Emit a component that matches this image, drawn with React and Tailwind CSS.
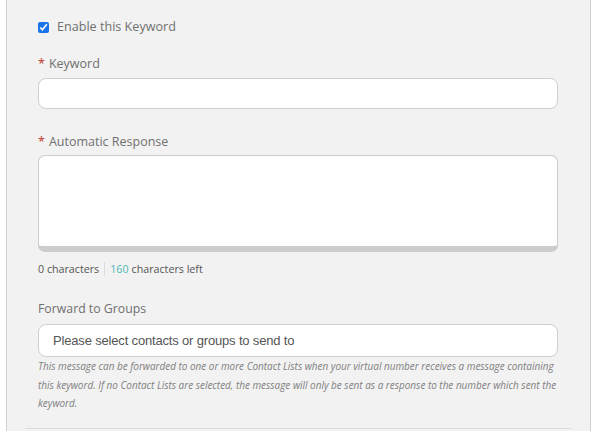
export default function App() {
  return (
    <div className="h-[431px] w-[596px] overflow-hidden bg-white">
      <div
        className="ml-[6px] h-full w-[585px] border-x border-[#d0d0d0] bg-[#f2f2f2]"
        style={{ fontFamily: '"Open Sans", "Noto Sans", sans-serif' }}
      >
        <div className="pl-[31px] pr-[32px] pt-[19px]">
          {/* Enable checkbox */}
          <label className="flex h-4 items-center text-[12.6px] text-[#707070]">
            <input
              type="checkbox"
              checked
              readOnly
              className="m-0 h-[11px] w-[11px] accent-[#1a73e8]"
            />
            <span className="ml-[8px]">Enable this Keyword</span>
          </label>

          {/* Keyword */}
          <div className="mt-[20px] flex h-[18px] items-center text-[12.5px] text-[#707070]">
            <span className="mr-[4px] text-[#c0392b]">*</span>Keyword
          </div>
          <div className="mt-[5px] h-[31px] rounded-[8px] border border-[#cfcfcf] bg-white" />

          {/* Automatic Response */}
          <div className="mt-[24px] flex h-[18px] items-center text-[12.5px] text-[#707070]">
            <span className="mr-[4px] text-[#c0392b]">*</span>Automatic Response
          </div>
          <div className="mt-[4px] h-[97px] rounded-[7px] border border-b-[6px] border-[#cccccc] bg-white" />

          <div className="mt-[9px] flex h-4 items-center text-[10.7px] text-[#555]">
            <span>0 characters</span>
            <span className="mx-[5px] h-[14px] w-px bg-[#dcdcdc]" />
            <span className="text-[#4fb5b5]">160</span>
            <span className="ml-[3px]">characters left</span>
          </div>

          {/* Forward to Groups */}
          <div className="mt-[23px] flex h-[18px] items-center text-[12.3px] text-[#707070]">
            Forward to Groups
          </div>
          <div
            className="mt-[6px] flex h-[33px] items-center rounded-[8px] border border-[#cfcfcf] bg-white pl-[14px] text-[13px] tracking-[-0.17px] text-[#555]"
            style={{ fontFamily: '"Liberation Sans", Arial, sans-serif' }}
          >
            Please select contacts or groups to send to
          </div>
          <p className="whitespace-nowrap text-[9.95px] italic leading-[18.5px] text-[#808080]">
            This message can be forwarded to one or more Contact Lists when your virtual number receives a message containing
            <br />
            this keyword. If no Contact Lists are selected, the message will only be sent as a response to the number which sent the
            <br />
            keyword.
          </p>
        </div>
        <div className="mx-[18px] mt-[15px] border-t border-[#dddddd]" />
      </div>
    </div>
  );
}
